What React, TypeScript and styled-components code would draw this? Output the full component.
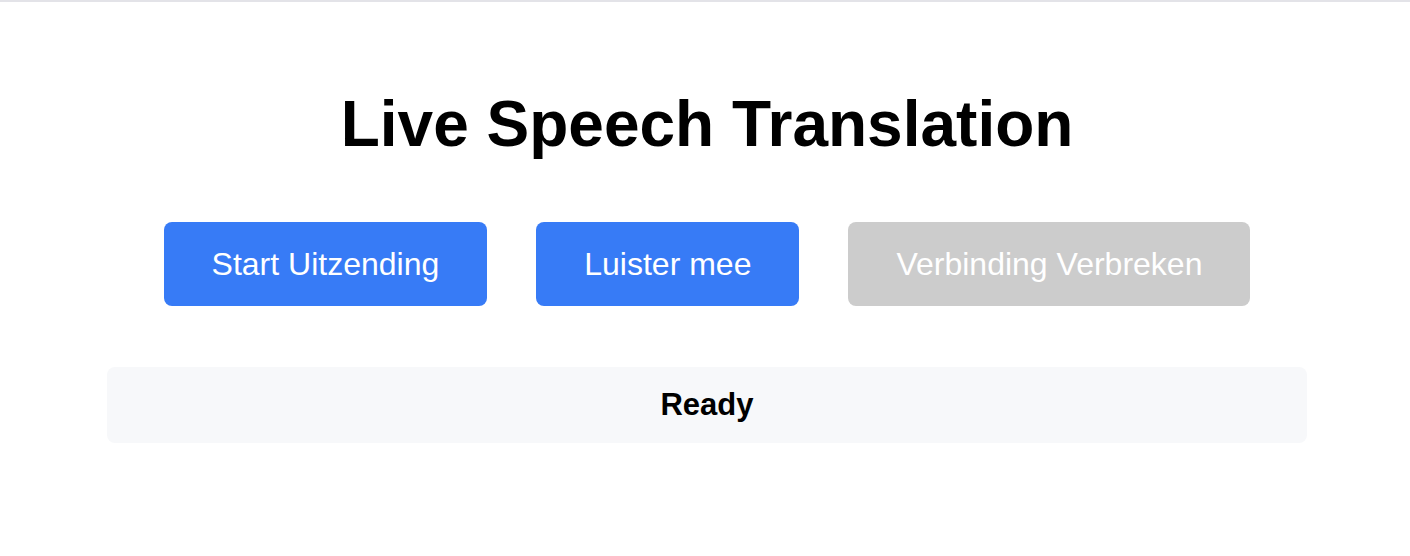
import React from "react";
import styled, { createGlobalStyle } from "styled-components";

// Global

const GlobalStyle = createGlobalStyle`
  html, body {
    margin: 0;
    padding: 0;
    background: #ffffff;
  }
  body {
    font-family: "Liberation Sans", Arial, Helvetica, sans-serif;
    color: #000000;
  }
`;

// Styled Components

const Page = styled.div`
  border-top: 2px solid #e3e3e8;
  padding: 86px 0 0 4px;
  min-height: 554px;
  box-sizing: border-box;
`;

const Container = styled.main`
  max-width: 1200px;
  margin: 0 auto;
`;

const Title = styled.h1`
  margin: 0;
  text-align: center;
  font-size: 64px;
  line-height: 72px;
  font-weight: 700;
`;

const ButtonRow = styled.div`
  margin-top: 62px;
  display: flex;
  justify-content: center;
  gap: 49px;
`;

const ActionButton = styled.button<{ $disabled?: boolean }>`
  padding: 24px 48px;
  font-family: inherit;
  font-size: 32px;
  line-height: 36px;
  color: #ffffff;
  background-color: ${(p) => (p.$disabled ? "#cccccc" : "#377bf6")};
  border: none;
  border-radius: 8px;
  cursor: ${(p) => (p.$disabled ? "not-allowed" : "pointer")};
  white-space: nowrap;
`;

const StatusBox = styled.div`
  margin-top: 61px;
  padding: 20px;
  background-color: #f7f8fa;
  border-radius: 8px;
  text-align: center;
  font-size: 31px;
  line-height: 36px;
  font-weight: 700;
`;

// Main Component
export default function App() {
  const buttons = [
    { label: "Start Uitzending", disabled: false },
    { label: "Luister mee", disabled: false },
    { label: "Verbinding Verbreken", disabled: true },
  ];

  return (
    <>
      <GlobalStyle />
      <Page>
        <Container>
          <Title>Live Speech Translation</Title>
          <ButtonRow>
            {buttons.map((b) => (
              <ActionButton key={b.label} $disabled={b.disabled} disabled={b.disabled}>
                {b.label}
              </ActionButton>
            ))}
          </ButtonRow>
          <StatusBox>Ready</StatusBox>
        </Container>
      </Page>
    </>
  );
}
